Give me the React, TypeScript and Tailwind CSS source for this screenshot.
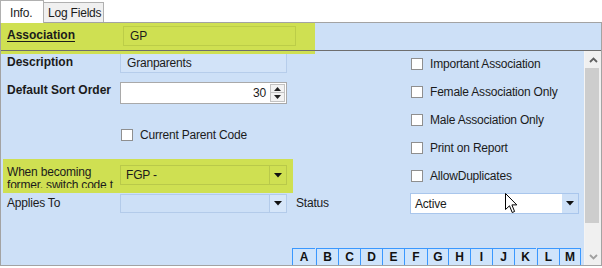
import React from "react";

const DownArrow = () => (
  <svg width="8" height="5" viewBox="0 0 8 5">
    <polygon points="0,0 8,0 4,4.5" fill="#111" />
  </svg>
);

const Check = () => (
  <div className="w-[12px] h-[12px] bg-white border border-[#8f8f8f] shrink-0" />
);

const letters: { l: string; w: string }[] = [
  { l: "A", w: "w-[23px] mr-[1px]" },
  { l: "B", w: "w-[22px]" },
  { l: "C", w: "w-[22px]" },
  { l: "D", w: "w-[22px]" },
  { l: "E", w: "w-[22px]" },
  { l: "F", w: "w-[23px]" },
  { l: "G", w: "w-[21px]" },
  { l: "H", w: "w-[22px]" },
  { l: "I", w: "w-[22px]" },
  { l: "J", w: "w-[22px]" },
  { l: "K", w: "w-[22px] mr-[1px]" },
  { l: "L", w: "w-[22px]" },
  { l: "M", w: "w-[22px] border-r" },
];

const rightChecks = [
  "Important Association",
  "Female Association Only",
  "Male Association Only",
  "Print on Report",
  "AllowDuplicates",
];

export default function App() {
  return (
    <div className="w-[602px] h-[268px] bg-white relative overflow-hidden font-['Liberation_Sans',Arial,sans-serif] text-[12px] tracking-[-0.2px] leading-[14px] text-[#1b1b1b]">
      {/* tabs */}
      <div className="flex items-end h-[22px]">
        <div className="relative z-20 w-[44px] h-[23px] -mb-px bg-white border border-b-0 border-[#b0b0b0] pl-[9px] pt-[5px] whitespace-nowrap">
          Info.
        </div>
        <div className="w-[60px] h-[20px] bg-[#f0f0f0] border border-l-0 border-b-0 border-[#b0b0b0] pl-[4px] pt-[3px] whitespace-nowrap">
          Log Fields
        </div>
      </div>

      {/* panel */}
      <div className="relative h-[244px] border border-[#a3a3a3] bg-[#cde0f7] flex flex-col">
        {/* header row */}
        <div className="relative h-[28px] shrink-0">
          <div className="absolute left-0 top-0 w-[314px] h-[31px] bg-[#cfe052]" />
          <div className="relative z-10 flex h-[27px]">
            <div className="w-[122px] pl-[6px] pt-[5px] font-bold tracking-normal underline underline-offset-[2px]">
              Association
            </div>
            <div className="mt-[3px] w-[173px] h-[20px] border border-[#bccd48] pl-[6px] flex items-center">
              GP
            </div>
          </div>
          <div className="absolute z-10 left-0 right-0 bottom-0 h-px bg-[#6e6e6e]" />
        </div>

        {/* body */}
        <div className="flex flex-1 min-h-0">
          <div className="flex-1 flex flex-col">
            {/* top section */}
            <div className="flex h-[142px]">
              <div className="w-[300px] flex flex-col">
                {/* description */}
                <div className="flex mt-[2px] h-[20px]">
                  <div className="w-[119px] pl-[6px] pt-[2px] font-bold tracking-normal">Description</div>
                  <div className="w-[167px] h-[20px] border border-[#b6cdeb] bg-[#d2e3f8] pl-[6px] flex items-center">
                    Granparents
                  </div>
                </div>
                {/* sort order */}
                <div className="flex mt-[9px] h-[22px]">
                  <div className="w-[119px] pl-[6px] pt-[1px] font-bold tracking-normal whitespace-nowrap">Default Sort Order</div>
                  <div className="w-[167px] h-[22px] bg-white border border-[#a9a9a9] flex items-center justify-end">
                    <span className="mr-[4px]">30</span>
                    <div className="w-[15px] h-[18px] mr-[1px] flex flex-col">
                      <div className="h-[9px] border border-[#c2c2c2] bg-[#f2f2f2] flex items-center justify-center">
                        <svg width="7" height="4" viewBox="0 0 7 4">
                          <polygon points="0,4 7,4 3.5,0" fill="#222" />
                        </svg>
                      </div>
                      <div className="h-[9px] border border-t-0 border-[#c2c2c2] bg-[#f2f2f2] flex items-center justify-center">
                        <svg width="7" height="4" viewBox="0 0 7 4">
                          <polygon points="0,0 7,0 3.5,4" fill="#222" />
                        </svg>
                      </div>
                    </div>
                  </div>
                </div>
                {/* current parent code */}
                <div className="flex items-center mt-[25px] h-[12px] pl-[120px]">
                  <Check />
                  <span className="ml-[7px] whitespace-nowrap">Current Parent Code</span>
                </div>
                {/* highlight */}
                <div className="mt-[18px] ml-[2px] w-[290px] h-[34px] bg-[#cfe052] flex">
                  <div className="w-[117px] pl-[4px] pt-[7px] leading-[13px]">
                    <div className="h-[22px] w-[107px] overflow-hidden">
                      <div className="whitespace-nowrap">When becoming</div>
                      <div className="whitespace-nowrap">former, switch code t</div>
                    </div>
                  </div>
                  <div className="mt-[6px] w-[167px] h-[20px] border border-[#b9c94a] flex">
                    <div className="flex-1 pl-[5px] flex items-center">FGP -</div>
                    <div className="w-[17px] border-l border-[#b9c94a] flex items-center justify-center">
                      <DownArrow />
                    </div>
                  </div>
                </div>
              </div>
              {/* right checkboxes */}
              <div className="ml-[110px] pt-[7px] flex flex-col gap-[16px]">
                {rightChecks.map((t) => (
                  <div key={t} className="flex items-center h-[12px]">
                    <Check />
                    <span className="ml-[7px] whitespace-nowrap">{t}</span>
                  </div>
                ))}
              </div>
            </div>

            {/* applies / status row */}
            <div className="flex h-[21px]">
              <div className="w-[119px] pl-[6px] pt-[3px]">Applies To</div>
              <div className="mt-[1px] w-[167px] h-[19px] border border-[#b3cbea] flex">
                <div className="flex-1" />
                <div className="w-[17px] border-l border-[#b3cbea] bg-[#d6e6f9] flex items-center justify-center">
                  <DownArrow />
                </div>
              </div>
              <div className="ml-[9px] w-[114px] pt-[3px]">Status</div>
              <div className="w-[169px] h-[21px] border border-[#a9c6ec] flex">
                <div className="flex-1 bg-white pl-[4px] flex items-center">Active</div>
                <div className="w-[16px] bg-[#cde0f7] flex items-center justify-center">
                  <DownArrow />
                </div>
              </div>
            </div>

            <div className="flex-1" />

            {/* letters */}
            <div className="flex h-[17px] pl-[291px]">
              {letters.map((x) => (
                <div
                  key={x.l}
                  className={`${x.w} h-[17px] border-t border-l border-[#3a98ff] bg-[#cfe4fb] flex items-center justify-center font-bold tracking-normal text-[#111]`}
                >
                  {x.l}
                </div>
              ))}
            </div>
          </div>

          {/* scrollbar */}
          <div className="w-[17px] border-l border-[#f4f4f4] bg-[#f0f0f0] flex flex-col">
            <div className="h-[17px] flex items-center justify-center">
              <svg width="9" height="6" viewBox="0 0 9 6">
                <polyline points="1,5 4.5,1.5 8,5" fill="none" stroke="#606060" strokeWidth="1.8" />
              </svg>
            </div>
            <div className="h-[155px] mr-[2px] bg-[#cdcdcd]" />
            <div className="flex-1" />
            <div className="h-[17px] flex items-center justify-center">
              <svg width="9" height="6" viewBox="0 0 9 6">
                <polyline points="1,1 4.5,4.5 8,1" fill="none" stroke="#a0a0a0" strokeWidth="1.8" />
              </svg>
            </div>
          </div>
        </div>
      </div>

      {/* mouse cursor */}
      <svg className="absolute left-[505px] top-[193px] z-30" width="13" height="21" viewBox="0 0 13 21">
        <path d="M0.5,0.5 L0.5,16.5 L4.5,12.8 L7.2,19.5 L9.6,18.5 L6.9,11.9 L11.8,11.9 Z" fill="#fff" stroke="#000" strokeWidth="1" strokeLinejoin="miter" />
      </svg>
    </div>
  );
}
